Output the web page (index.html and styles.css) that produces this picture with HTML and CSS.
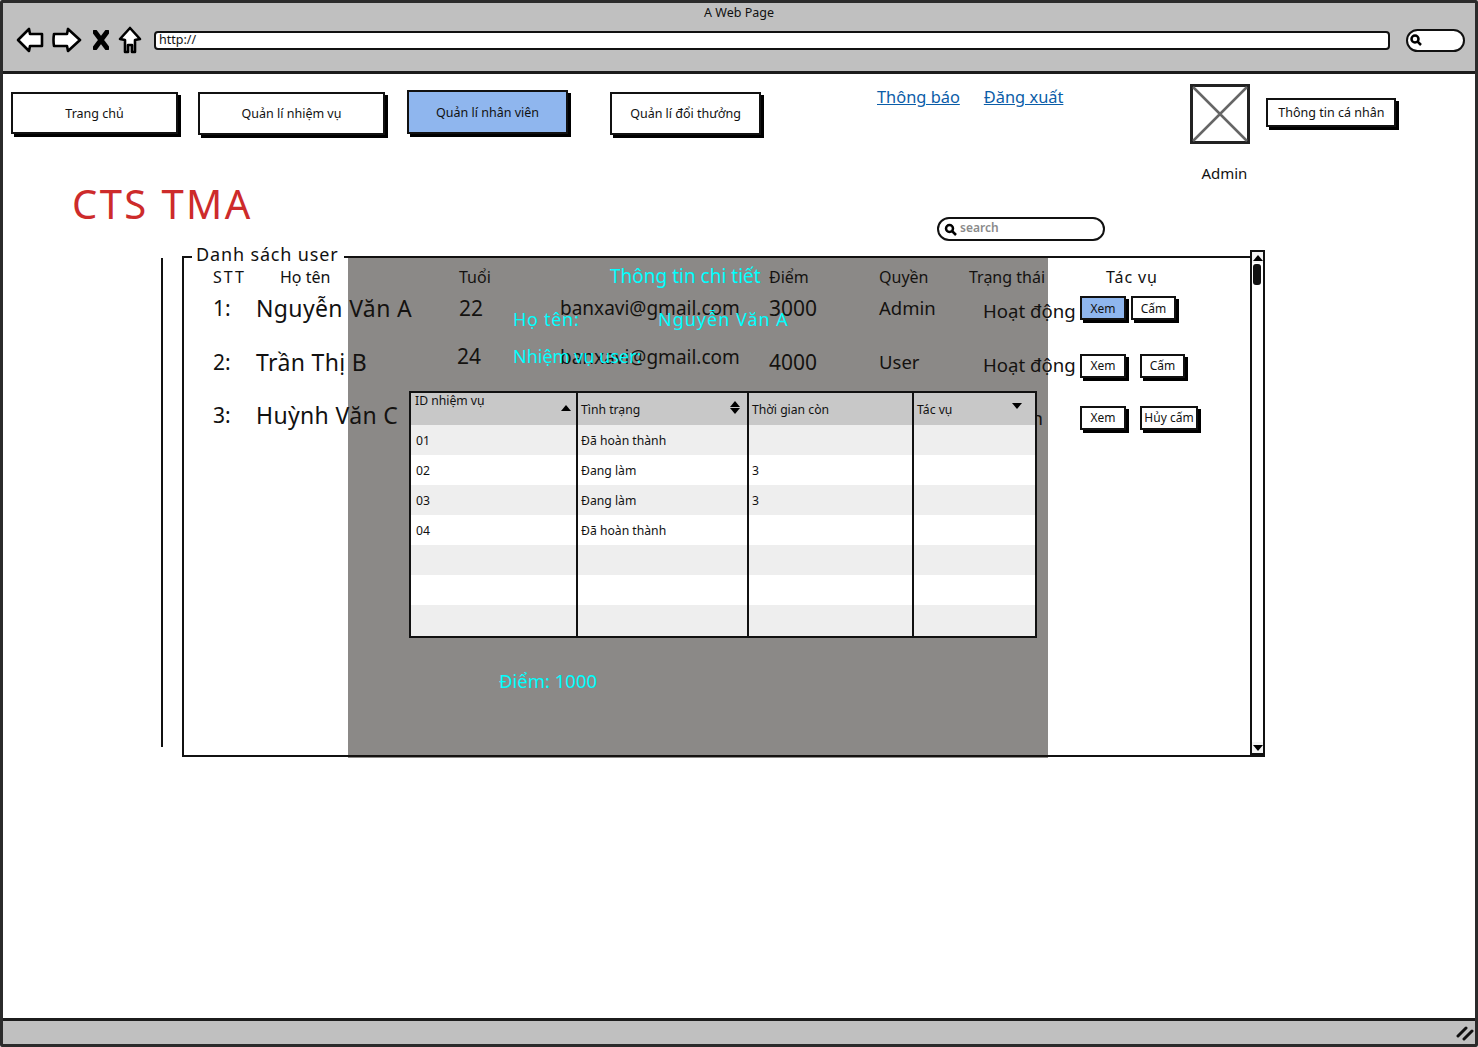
FILE: index.html
```html
<!DOCTYPE html>
<html lang="vi">
<head>
  <meta charset="UTF-8">
  <meta name="viewport" content="width=device-width, initial-scale=1.0">
  <title>A Web Page</title>
  <link rel="stylesheet" href="styles.css">
</head>
<body>
  <div class="window">
    <!-- browser chrome -->
    <div class="chrome">
      <div class="chrome-title">A Web Page</div>
      <div class="chrome-tools">
        <svg class="tool tool-back" width="28" height="26" viewBox="0 0 28 26"><path d="M2 13 L13 2 L14 7 L26 7 L26 19 L14 19 L13 24 Z" /></svg>
        <svg class="tool tool-next" width="30" height="26" viewBox="0 0 30 26"><path d="M28 13 L16 2 L15 7 L2 7 Q1 13 2 19 L15 19 L16 24 Z" /></svg>
        <svg class="tool tool-stop" width="16" height="20" viewBox="0 0 16 20"><path class="stop" d="M2 2 L14 18 M14 2 L2 18" /></svg>
        <svg class="tool tool-home" width="24" height="28" viewBox="0 0 24 28"><path d="M12 2 L22 13 L17 14 L17 26 L14 26 L14 19 L10 19 L10 26 L7 26 L7 14 L2 13 Z" /></svg>
        <div class="address">http://</div>
        <div class="chrome-search">
          <svg width="14" height="14" viewBox="0 0 14 14"><circle cx="6" cy="6" r="3.5" /><path d="M8.5 8.5 L12 12" /></svg>
        </div>
      </div>
    </div>

    <div class="content">
      <div class="topbar">
        <a class="btn nav-home">Trang chủ</a>
        <a class="btn nav-task">Quản lí nhiệm vụ</a>
        <a class="btn nav-staff selected">Quản lí nhân viên</a>
        <a class="btn nav-reward">Quản lí đổi thưởng</a>
        <div class="links">
          <a href="#">Thông báo</a>
          <a href="#">Đăng xuất</a>
        </div>
        <div class="account">
          <svg class="avatar" width="60" height="60" viewBox="0 0 60 60"><rect x="1.5" y="1.5" width="57" height="57" /><path d="M3 3 L57 57 M57 3 L3 57" /></svg>
          <div class="account-name">Admin</div>
        </div>
        <a class="btn nav-profile">Thông tin cá nhân</a>
      </div>

      <div class="title-row">
        <h1 class="brand">CTS TMA</h1>
        <div class="search">
          <svg width="13" height="13" viewBox="0 0 13 13"><circle cx="5.5" cy="5.5" r="3.5" /><path d="M8 8 L12 12" /></svg>
          <span>search</span>
        </div>
      </div>

      <div class="list-area">
        <div class="side-line"></div>
        <div class="panel">
          <div class="panel-legend">Danh sách user</div>

          <div class="user-row head">
            <div class="c-no">STT</div>
            <div class="c-name">Họ tên</div>
            <div class="c-age">Tuổi</div>
            <div class="c-mail">Email</div>
            <div class="c-score">Điểm</div>
            <div class="c-role">Quyền</div>
            <div class="c-state">Trạng thái</div>
            <div class="c-act">Tác vụ</div>
          </div>

          <div class="user-row first">
            <div class="c-no">1:</div>
            <div class="c-name">Nguyễn Văn A</div>
            <div class="c-age">22</div>
            <div class="c-mail">banxavi@gmail.com</div>
            <div class="c-score">3000</div>
            <div class="c-role">Admin</div>
            <div class="c-state">Hoạt động</div>
            <div class="c-act">
              <a class="btn mini selected">Xem</a>
              <a class="btn mini ban">Cấm</a>
            </div>
          </div>

          <div class="user-row second">
            <div class="c-no">2:</div>
            <div class="c-name">Trần Thị B</div>
            <div class="c-age">24</div>
            <div class="c-mail">banxavi@gmail.com</div>
            <div class="c-score">4000</div>
            <div class="c-role">User</div>
            <div class="c-state">Hoạt động</div>
            <div class="c-act gap">
              <a class="btn mini">Xem</a>
              <a class="btn mini ban">Cấm</a>
            </div>
          </div>

          <div class="user-row third">
            <div class="c-no">3:</div>
            <div class="c-name">Huỳnh Văn C</div>
            <div class="c-age">20</div>
            <div class="c-mail"></div>
            <div class="c-score">1000</div>
            <div class="c-role">User</div>
            <div class="c-state end">Hết hạn</div>
            <div class="c-act gap">
              <a class="btn mini">Xem</a>
              <a class="btn mini unban">Hủy cấm</a>
            </div>
          </div>

          <div class="scrollbar">
            <div class="scroll-btn"><span class="arrow up"></span></div>
            <div class="scroll-thumb"></div>
            <div class="scroll-btn bottom"><span class="arrow down"></span></div>
          </div>
        </div>

        <!-- modal shown over the list -->
        <div class="overlay">
          <div class="ov-title">Thông tin chi tiết</div>
          <div class="ov-line ov-name"><span>Họ tên:</span><span>Nguyễn Văn A</span></div>
          <div class="ov-line ov-task">Nhiệm vụ user:</div>
          <table class="task-table">
            <thead>
              <tr>
                <th class="col-id"><div class="th-in top">ID nhiệm vụ<span class="arrow up"></span></div></th>
                <th class="col-state"><div class="th-in">Tình trạng<span class="sort"><span class="arrow up"></span><span class="arrow down"></span></span></div></th>
                <th class="col-time"><div class="th-in">Thời gian còn</div></th>
                <th class="col-act"><div class="th-in">Tác vụ<span class="arrow down"></span></div></th>
              </tr>
            </thead>
            <tbody>
              <tr><td>01</td><td>Đã hoàn thành</td><td></td><td></td></tr>
              <tr><td>02</td><td>Đang làm</td><td>3</td><td></td></tr>
              <tr><td>03</td><td>Đang làm</td><td>3</td><td></td></tr>
              <tr><td>04</td><td>Đã hoàn thành</td><td></td><td></td></tr>
              <tr><td></td><td></td><td></td><td></td></tr>
              <tr><td></td><td></td><td></td><td></td></tr>
              <tr><td></td><td></td><td></td><td></td></tr>
            </tbody>
          </table>
          <div class="ov-score">Điểm: 1000</div>
        </div>
      </div>
    </div>

    <div class="statusbar">
      <svg width="18" height="16" viewBox="0 0 18 16"><path d="M2 11 L10 3 M8 14 L16 6" /></svg>
    </div>
  </div>
</body>
</html>
```

FILE: styles.css
```css
* { box-sizing: border-box; }
html, body { margin: 0; height: 100%; }
body { font-family: "Noto Sans", sans-serif; color: #111; background: #fff; overflow: hidden; }
a { cursor: pointer; }

.window { width: 1478px; height: 1047px; border: 3px solid #2b2b2b; border-radius: 2px; display: flex; flex-direction: column; }

/* chrome */
.chrome { height: 71px; flex: none; background: #c0c0c0; border-bottom: 3px solid #1c1c1c; padding-top: 2px; }
.chrome-title { text-align: center; font-size: 12.5px; line-height: 16px; }
.chrome-tools { display: flex; align-items: center; padding: 0 0 0 13px; height: 38px; }
.tool path { fill: #fff; stroke: #000; stroke-width: 2.6; stroke-linejoin: round; }
.tool-next { margin-left: 8px; }
.tool-stop { margin-left: 11px; }
.tool-stop .stop { stroke-width: 5; stroke-linecap: round; }
.tool-home { margin-left: 9px; }
.address { margin-left: 12px; width: 1236px; height: 19px; background: #fff; border: 2.5px solid #111; border-radius: 4px; font-size: 12.5px; line-height: 13px; padding-left: 3px; }
.chrome-search { margin-left: 16px; width: 59px; height: 23px; background: #fff; border: 2.5px solid #111; border-radius: 12px; padding-left: 1px; }
.chrome-search svg { display: block; margin-top: 2px; }
.chrome-search circle, .chrome-search path, .search circle, .search path { fill: none; stroke: #000; stroke-width: 2.5; }

/* buttons */
.btn { display: flex; align-items: center; justify-content: center; background: #fff; border: 2px solid #111; box-shadow: 3px 3px 0 #000; font-size: 12.5px; color: #111; }
.btn.selected { background: #8fb6ee; }

.content { flex: 1; min-height: 0; }

/* top row */
.topbar { display: flex; align-items: flex-start; height: 108px; padding: 16px 0 0 8px; }
.nav-home { width: 167px; height: 42px; margin-top: 2px; }
.nav-task { width: 187px; height: 43px; margin: 2px 0 0 20px; }
.nav-staff { width: 161px; height: 44px; margin: 0 0 0 22px; }
.nav-reward { width: 151px; height: 43px; margin: 2px 0 0 42px; }
.links { display: flex; gap: 24px; margin-left: 116px; font-size: 16.4px; line-height: 22px; margin-top: -4px; }
.links a { color: #0b5da8; text-decoration: underline; }
.account { width: 60px; margin: -6px 0 0 127px; }
.avatar { display: block; }
.avatar rect { fill: #fff; stroke: #222; stroke-width: 3; }
.avatar path { stroke: #666; stroke-width: 2.5; }
.account-name { font-size: 15px; line-height: 22px; margin: 18px 0 0 11px; }
.nav-profile { width: 130px; height: 29px; margin: 8px 0 0 16px; }

/* title and search */
.title-row { display: flex; align-items: flex-start; height: 74px; padding-left: 69px; }
.brand { width: 865px; margin: -2px 0 0; color: #cd2b2b; font-size: 40px; line-height: 48px; font-weight: 400; letter-spacing: 2.4px; }
.search { width: 168px; height: 24px; margin-top: 35px; border: 2px solid #111; border-radius: 12px; background: #fff; display: flex; align-items: center; gap: 3px; padding: 0 0 3px 5px; font-size: 12px; color: #8a8a8a; font-weight: 600; }
.search svg { margin-top: 4px; }

/* user list */
.list-area { position: relative; display: flex; align-items: flex-start; padding-left: 158px; }
.side-line { width: 2px; height: 489px; background: #111; margin-top: 2px; }
.panel { position: relative; width: 1083px; height: 501px; margin-left: 19px; border: 2px solid #111; background: #fff; }
.panel-legend { position: absolute; left: 8px; top: -16px; background: #fff; padding: 0 5px 0 4px; font-size: 18px; line-height: 24px; letter-spacing: .85px; }

.user-row { display: grid; grid-template-columns: 43px 203px 101px 209px 110px 90px 97px 1fr; align-items: center; padding-left: 29px; font-size: 21px; }
.user-row.head { font-size: 16px; height: 24px; margin-top: 6px; }
.user-row.first { height: 34px; margin-top: 3px; }
.user-row.second { height: 34px; margin-top: 20px; }
.user-row.third { height: 34px; margin-top: 19px; }
.user-row .c-name { font-size: 23px; letter-spacing: .35px; white-space: nowrap; }
.user-row.head .c-name { font-size: 16px; letter-spacing: 0; margin-left: 24px; }
.user-row.head .c-no { letter-spacing: 2px; }
.user-row .c-state { font-size: 18.6px; white-space: nowrap; margin: 5px 0 0 14px; }
.user-row .c-role { font-size: 18.5px; margin-top: -2px; }
.user-row.head .c-state, .user-row.head .c-role { font-size: 16px; margin: 0; }
.user-row .c-mail { font-size: 19px; white-space: nowrap; }
.user-row.head .c-mail { visibility: hidden; }
.user-row.head .c-act { margin-left: 40px; letter-spacing: .9px; }
.c-act { display: flex; gap: 5px; font-size: 16px; margin-left: 14px; }
.c-act.gap { gap: 14px; }
.c-state.end { margin-left: 0; width: 74px; text-align: right; }
.user-row.second .c-age { margin-top: -12px; margin-left: -2px; }
.user-row.second .c-mail { margin-top: -10px; }
.user-row.second .c-act { margin-top: 7px; }
.user-row.third .c-act { margin-top: 5px; }

.btn.mini { width: 46px; height: 24px; font-size: 12px; }
.btn.mini.ban { width: 45px; }
.btn.mini.unban { width: 58px; }

.scrollbar { position: absolute; right: -2px; top: -8px; width: 15px; height: 506px; border: 2px solid #111; border-bottom-width: 3px; background: #fff; display: flex; flex-direction: column; }
.scroll-btn { height: 11px; display: flex; align-items: center; justify-content: center; background: #f4f4f4; flex: none; }
.scroll-btn.bottom { margin-top: auto; }
.scroll-thumb { width: 8px; height: 21px; margin: 1px 0 0 1px; background: #111; border-radius: 3px; flex: none; }

.arrow { display: inline-block; width: 0; height: 0; border-left: 5px solid transparent; border-right: 5px solid transparent; }
.arrow.up { border-bottom: 6px solid #000; }
.arrow.down { border-top: 6px solid #000; }

/* overlay */
.overlay { position: absolute; left: 345px; top: 1px; width: 700px; height: 501px; background: rgba(24, 20, 16, 0.5); color: #0ff; display: flex; flex-direction: column; align-items: flex-start; }
.ov-title { font-size: 19px; line-height: 24px; margin: 7px 0 0 262px; }
.ov-line { font-size: 18px; line-height: 24px; margin-left: 165px; }
.ov-name { display: flex; margin-top: 19px; }
.ov-name span:first-child { width: 145px; letter-spacing: .7px; }
.ov-name span:last-child { letter-spacing: 1px; }
.ov-task { margin-top: 13px; }
.task-table { border-collapse: collapse; width: 628px; table-layout: fixed; margin: 23px 0 0 61px; background: #fff; border: 2px solid #111; color: #111; font-size: 12.2px; }
.task-table th { height: 32px; background: #c8c8c8; font-weight: 400; padding: 0; text-align: left; border-left: 2px solid #111; vertical-align: top; }
.task-table th:first-child { border-left: 0; }
.th-in { display: flex; align-items: center; justify-content: space-between; height: 32px; padding: 0 7px 0 3px; }
.th-in.top { align-items: flex-start; padding: 0 5px 0 4px; line-height: 16px; }
.th-in.top .arrow { margin-top: 12px; }
.sort { display: flex; flex-direction: column; gap: 1px; margin-top: -3px; }
.col-act .arrow { margin-top: -6px; margin-right: 6px; }
.task-table td { height: 30px; padding: 0 0 0 3px; border-left: 2px solid #111; }
.task-table td:first-child { border-left: 0; padding-left: 5px; }
.task-table tbody tr:nth-child(odd) td { background: #eee; }
.task-table tbody tr:last-child td { height: 32px; }
.col-id { width: 167px; }
.col-state { width: 171px; }
.col-time { width: 165px; }
.ov-score { font-size: 18.5px; line-height: 24px; margin: 31px 0 0 151px; }

/* status bar */
.statusbar { flex: none; height: 26px; background: #c0c0c0; border-top: 3px solid #1c1c1c; display: flex; justify-content: flex-end; align-items: center; padding-right: 1px; }
.statusbar path { stroke: #111; stroke-width: 3; stroke-linecap: round; fill: none; }
```
